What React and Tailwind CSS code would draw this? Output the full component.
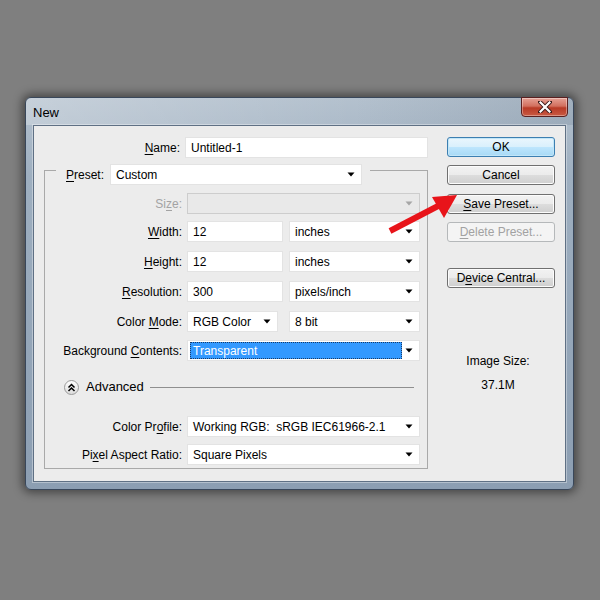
import React from "react";

const font = { fontFamily: '"Liberation Sans", Arial, sans-serif' };

function Arrow({ disabled }) {
  return (
    <svg width="8" height="5" viewBox="0 0 8 5" className="shrink-0">
      <path d="M0.5 0.5 L7.5 0.5 L4 4.5 Z" fill={disabled ? "#a6a6a6" : "#000"} />
    </svg>
  );
}

function U({ children }) {
  return <span className="underline underline-offset-[2px]">{children}</span>;
}

function Select({ w, children, disabled, highlight }) {
  return (
    <div
      className={`h-[21px] flex items-center border ${disabled ? "bg-[#e9e9e9] border-[#cdcdcd]" : "bg-white border-[#e3e3e3]"}`}
      style={{ width: w }}
    >
      {highlight ? (
        <div className="ml-[2px] h-[17px] w-[212px] bg-[#3399ff] border border-dotted border-[#1a3b66] flex items-center pl-[2px] text-white">
          {children}
        </div>
      ) : (
        <div className="flex-1 pl-[5px]">{children}</div>
      )}
      <div className="ml-auto pr-[6px] flex items-center">
        <Arrow disabled={disabled} />
      </div>
    </div>
  );
}

function Input({ w, children }) {
  return (
    <div className="h-[21px] bg-white border border-[#e3e3e3] flex items-center pl-[5px]" style={{ width: w }}>
      {children}
    </div>
  );
}

function Row({ label, children, mt, grey }) {
  return (
    <div className="flex items-center" style={{ marginTop: mt }}>
      <div className={`w-[137px] text-right ${grey ? "text-[#a3a3a3]" : ""}`}>{label}</div>
      <div className="ml-[5px] flex items-center gap-[6px]">{children}</div>
    </div>
  );
}

function Button({ children, mt, variant }) {
  const cls =
    variant === "ok"
      ? "border-[#3c7fb1] bg-[linear-gradient(to_bottom,#eaf6fd_0%,#d9f0fc_50%,#bee6fd_50%,#a7d9f5_100%)] shadow-[inset_0_0_0_1px_#c2e6f8]"
      : variant === "disabled"
      ? "border-[#b5b8ba] bg-[#f4f4f4] text-[#a2a2a2]"
      : "border-[#707070] bg-[linear-gradient(to_bottom,#f2f2f2_0%,#ebebeb_50%,#dddddd_50%,#cfcfcf_100%)] shadow-[inset_0_0_0_1px_#fcfcfc]";
  return (
    <div
      className={`w-[108px] h-[20px] border rounded-[3px] flex items-center justify-center ${cls}`}
      style={{ marginTop: mt }}
    >
      {children}
    </div>
  );
}

export default function App() {
  return (
    <div className="w-[600px] h-[600px] bg-[#7f7f7f] pt-[97px] pl-[25px] relative text-[12px] text-black" style={font}>
      <div className="w-[549px] h-[393px] rounded-[6px] border border-[#39475a] bg-[linear-gradient(to_bottom,#b4c1ce_0%,#9eafc0_20%,#8c9eb2_100%)] shadow-[0_0_10px_3px_rgba(0,0,0,0.45)] flex flex-col relative">
        <div className="h-[27px] flex items-start pl-[7px] pt-[5px] text-[13px] bg-[linear-gradient(to_right,rgba(255,255,255,0.25),rgba(255,255,255,0)_60%,rgba(60,80,100,0.15))] rounded-t-[5px]">
          New
          <div className="ml-auto mr-[5px] -mt-[6px] w-[47px] h-[20px] rounded-b-[4px] border border-[#5a2020] bg-[linear-gradient(to_bottom,#e6a195_0%,#d26f5e_45%,#b83a26_55%,#c95a43_100%)] flex items-center justify-center shadow-[inset_0_0_0_1px_rgba(255,255,255,0.35)]">
            <svg width="14" height="12" viewBox="0 0 14 12">
              <path d="M2 1 L12 11 M12 1 L2 11" stroke="#3a1a1a" strokeWidth="4" strokeLinecap="square" />
              <path d="M2.5 1.5 L11.5 10.5 M11.5 1.5 L2.5 10.5" stroke="#ffffff" strokeWidth="2.2" strokeLinecap="square" />
            </svg>
          </div>
        </div>
        <div className="mx-[7px] mb-[7px] flex-1 border border-[#5f7084] shadow-[0_0_0_1px_rgba(255,255,255,0.35)] bg-[#ececec] flex">
          <div className="w-[394px] flex flex-col">
            <div className="flex items-center mt-[11px]">
              <div className="w-[149px] text-right">
                <U>N</U>ame:
              </div>
              <div className="ml-[5px]">
                <Input w={243}>Untitled-1</Input>
              </div>
            </div>
            <div className="ml-[10px] mt-[12px] w-[384px] h-[299px] border border-[#a9a9a9] flex flex-col">
              <div className="ml-[11px] -mt-[7px] w-[314px] bg-[#ececec] flex items-center">
                <div className="pl-[10px] w-[54px]">
                  <U>P</U>reset:
                </div>
                <Select w={252}>Custom</Select>
              </div>
              <Row label={<>Si<U>z</U>e:</>} mt={8} grey>
                <Select w={233} disabled></Select>
              </Row>
              <Row label={<><U>W</U>idth:</>} mt={7}>
                <Input w={96}>12</Input>
                <Select w={131}>inches</Select>
              </Row>
              <Row label={<><U>H</U>eight:</>} mt={9}>
                <Input w={96}>12</Input>
                <Select w={131}>inches</Select>
              </Row>
              <Row label={<><U>R</U>esolution:</>} mt={9}>
                <Input w={96}>300</Input>
                <Select w={131}>pixels/inch</Select>
              </Row>
              <Row label={<>Color <U>M</U>ode:</>} mt={9}>
                <Select w={91}>RGB Color</Select>
                <div className="ml-[5px]">
                  <Select w={131}>8 bit</Select>
                </div>
              </Row>
              <Row label={<>Background <U>C</U>ontents:</>} mt={8}>
                <Select w={233} highlight>Transparent</Select>
              </Row>
              <div className="flex items-center mt-[19px] h-[14px]">
                <div className="ml-[19px] w-[15px] h-[15px] rounded-full border border-[#9a9a9a] bg-[linear-gradient(to_bottom,#ffffff,#dcdcdc)] flex items-center justify-center">
                  <svg width="9" height="9" viewBox="0 0 9 9">
                    <path d="M1.5 4.5 L4.5 1.5 L7.5 4.5 M1.5 8 L4.5 5 L7.5 8" fill="none" stroke="#000" strokeWidth="1.5" />
                  </svg>
                </div>
                <div className="ml-[7px] text-[13px]">Advanced</div>
                <div className="ml-[6px] w-[264px] h-px bg-[#8f8f8f]" />
              </div>
              <Row label={<>Color Pr<U>o</U>file:</>} mt={22}>
                <Select w={233}>Working RGB:&nbsp; sRGB IEC61966-2.1</Select>
              </Row>
              <Row label={<>Pi<U>x</U>el Aspect Ratio:</>} mt={7}>
                <Select w={233}>Square Pixels</Select>
              </Row>
            </div>
          </div>
          <div className="ml-[19px] flex flex-col items-center w-[108px]">
            <Button mt={11} variant="ok">OK</Button>
            <Button mt={8}>Cancel</Button>
            <Button mt={9}>
              <span><U>S</U>ave Preset...</span>
            </Button>
            <Button mt={8} variant="disabled">
              <span><U>D</U>elete Preset...</span>
            </Button>
            <Button mt={26}>
              <span>D<U>e</U>vice Central...</span>
            </Button>
            <div className="mt-[65px] leading-[16px] -ml-[6px]">Image Size:</div>
            <div className="mt-[8px] leading-[16px] -ml-[6px]">37.1M</div>
          </div>
        </div>
      </div>
      <svg className="absolute left-0 top-0 pointer-events-none" width="600" height="600">
        <path d="M390 231 L440 205" stroke="#e8141a" strokeWidth="6" strokeLinecap="butt" />
        <path d="M457 195 L432 197 L444 218 Z" fill="#e8141a" />
      </svg>
    </div>
  );
}
